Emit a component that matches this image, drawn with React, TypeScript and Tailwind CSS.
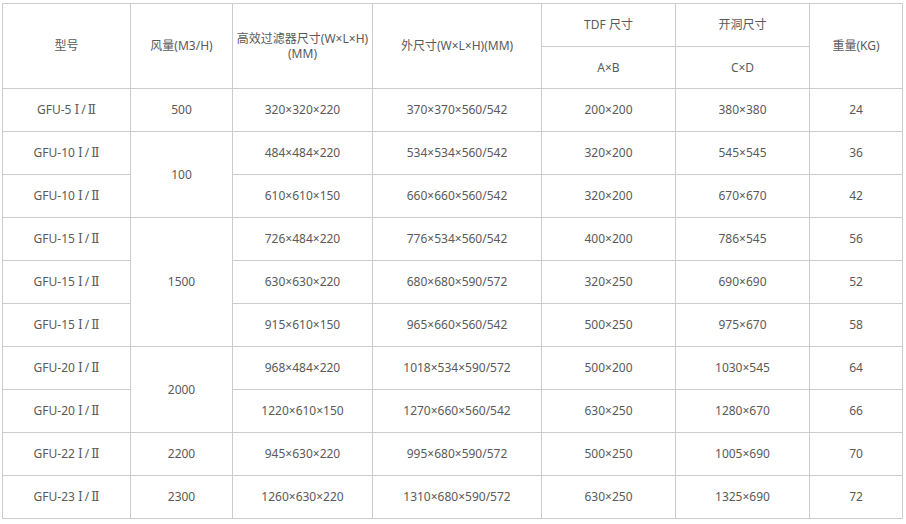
import React from 'react';

type Row = {
  model: string;
  flow?: string;
  span?: number;
  filter: string;
  outer: string;
  tdf: string;
  hole: string;
  kg: string;
};

const rows: Row[] = [
  { model: 'GFU-5', flow: '500', span: 1, filter: '320×320×220', outer: '370×370×560/542', tdf: '200×200', hole: '380×380', kg: '24' },
  { model: 'GFU-10', flow: '100', span: 2, filter: '484×484×220', outer: '534×534×560/542', tdf: '320×200', hole: '545×545', kg: '36' },
  { model: 'GFU-10', filter: '610×610×150', outer: '660×660×560/542', tdf: '320×200', hole: '670×670', kg: '42' },
  { model: 'GFU-15', flow: '1500', span: 3, filter: '726×484×220', outer: '776×534×560/542', tdf: '400×200', hole: '786×545', kg: '56' },
  { model: 'GFU-15', filter: '630×630×220', outer: '680×680×590/572', tdf: '320×250', hole: '690×690', kg: '52' },
  { model: 'GFU-15', filter: '915×610×150', outer: '965×660×560/542', tdf: '500×250', hole: '975×670', kg: '58' },
  { model: 'GFU-20', flow: '2000', span: 2, filter: '968×484×220', outer: '1018×534×590/572', tdf: '500×200', hole: '1030×545', kg: '64' },
  { model: 'GFU-20', filter: '1220×610×150', outer: '1270×660×560/542', tdf: '630×250', hole: '1280×670', kg: '66' },
  { model: 'GFU-22', flow: '2200', span: 1, filter: '945×630×220', outer: '995×680×590/572', tdf: '500×250', hole: '1005×690', kg: '70' },
  { model: 'GFU-23', flow: '2300', span: 1, filter: '1260×630×220', outer: '1310×680×590/572', tdf: '630×250', hole: '1325×690', kg: '72' },
];

const cell = 'border border-[#cccccc] text-center align-middle font-normal p-0';
const roman = "font-['DejaVu_Serif','Liberation_Serif',serif] text-[12px]";

export default function App() {
  return (
    <div className="min-h-screen bg-white pl-[2px] pt-[3px] text-[12px] leading-[14px] text-[#5a5a5a] font-['Noto_Sans','Noto_Sans_CJK_SC',sans-serif]">
      <table className="table-fixed border-collapse w-[900px]">
        <colgroup>
          <col className="w-[128px]" />
          <col className="w-[102px]" />
          <col className="w-[140px]" />
          <col className="w-[169px]" />
          <col className="w-[134px]" />
          <col className="w-[134px]" />
          <col className="w-[93px]" />
        </colgroup>
        <thead>
          <tr className="h-[43px]">
            <th rowSpan={2} className={cell}>型号</th>
            <th rowSpan={2} className={cell}>风量(M3/H)</th>
            <th rowSpan={2} className={`${cell} leading-[15px]`}>
              高效过滤器尺寸(W×L×H)
              <br />
              (MM)
            </th>
            <th rowSpan={2} className={cell}>外尺寸(W×L×H)(MM)</th>
            <th className={cell}>TDF 尺寸</th>
            <th className={cell}>开洞尺寸</th>
            <th rowSpan={2} className={cell}>重量(KG)</th>
          </tr>
          <tr className="h-[42px]">
            <th className={cell}>A×B</th>
            <th className={cell}>C×D</th>
          </tr>
        </thead>
        <tbody>
          {rows.map((r, i) => (
            <tr key={i} className="h-[43px]">
              <td className={cell}>
                {r.model}{' '}
                <span className={roman}>Ⅰ</span>
                <span className="mx-[2px]">/</span>
                <span className={roman}>Ⅱ</span>
              </td>
              {r.flow && (
                <td rowSpan={r.span} className={cell}>
                  {r.flow}
                </td>
              )}
              <td className={cell}>{r.filter}</td>
              <td className={cell}>{r.outer}</td>
              <td className={cell}>{r.tdf}</td>
              <td className={cell}>{r.hole}</td>
              <td className={cell}>{r.kg}</td>
            </tr>
          ))}
        </tbody>
      </table>
    </div>
  );
}
